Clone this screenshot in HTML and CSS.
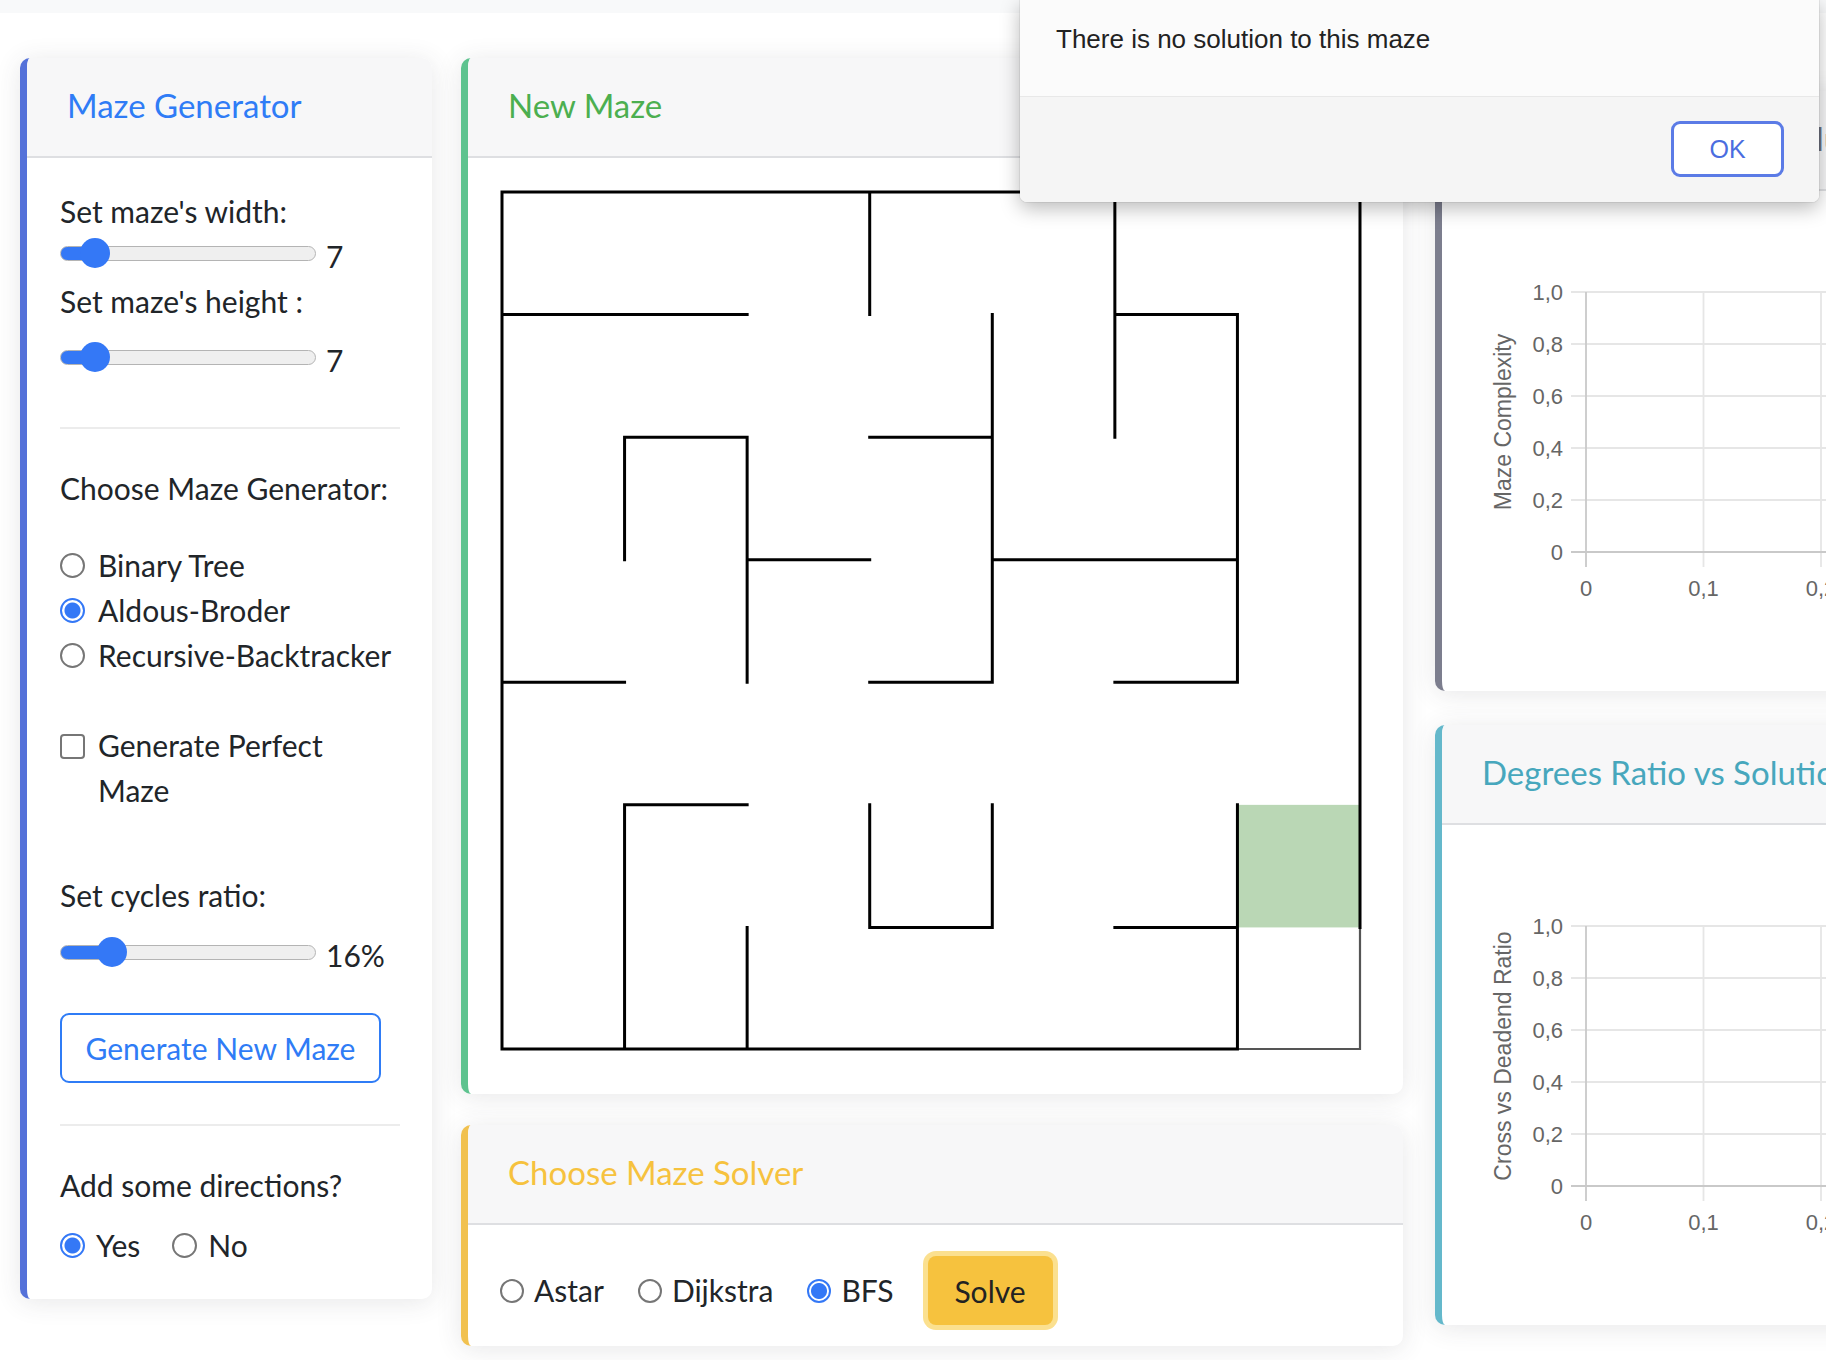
FILE: index.html
```html
<!DOCTYPE html>
<html lang="en">
<head>
<meta charset="utf-8">
<title>Maze</title>
<link rel="stylesheet" href="styles.css">
</head>
<body>
<div class="topbar"></div>
<main class="page">
  <section class="col col-left">
    <div class="card card-primary">
      <div class="card-header"><h6 class="title t-primary">Maze Generator</h6></div>
      <div class="card-body gen-body">
        <div class="line">Set maze's width:</div>
        <div class="range-row"><input class="range" type="range" min="5" max="28" value="7" style="--fill:35px"><span class="range-val">7</span></div>
        <div class="line">Set maze's height :</div>
        <div class="range-row mt14"><input class="range" type="range" min="5" max="28" value="7" style="--fill:35px"><span class="range-val">7</span></div>
        <hr class="sep sep1">
        <div class="line">Choose Maze Generator:</div>
        <div class="radio-group">
          <label class="opt"><input type="radio" name="gen" class="radio"><span>Binary Tree</span></label>
          <label class="opt"><input type="radio" name="gen" class="radio" checked><span>Aldous-Broder</span></label>
          <label class="opt"><input type="radio" name="gen" class="radio"><span>Recursive-Backtracker</span></label>
        </div>
        <label class="check-row"><input type="checkbox" class="check"><span class="check-text">Generate Perfect Maze</span></label>
        <div class="line mt60">Set cycles ratio:</div>
        <div class="range-row mt15"><input class="range" type="range" min="0" max="100" value="16" style="--fill:51px"><span class="range-val">16%</span></div>
        <button class="btn-outline">Generate New Maze</button>
        <hr class="sep sep2">
        <div class="line">Add some directions?</div>
        <div class="inline-opts mt15">
          <label class="opt"><input type="radio" name="dir" class="radio" checked><span>Yes</span></label>
          <label class="opt opt-no"><input type="radio" name="dir" class="radio"><span>No</span></label>
        </div>
      </div>
    </div>
  </section>

  <section class="col col-mid">
    <div class="card card-success">
      <div class="card-header"><h6 class="title t-success">New Maze</h6></div>
      <div class="card-body maze-body">
        <svg class="maze" width="858" height="857" viewBox="0 0 858 857">
          <rect x="735.43" y="612.86" width="122.57" height="122.57" fill="#bad7b5"/>
          <path class="walls-gray" d="M735.43 857 H858 V735.43"/>
          <path class="walls" d="M0 0 H858 M0 0 V857 H735.43 M858 0 V735.43
            M0 122.57 H245.14 M612.86 122.57 H735.43 M122.57 245.14 H245.14 M367.71 245.14 H490.29
            M245.14 367.71 H367.71 M490.29 367.71 H735.43 M0 490.29 H122.57 M367.71 490.29 H490.29
            M612.86 490.29 H735.43 M122.57 612.86 H245.14 M367.71 735.43 H490.29 M612.86 735.43 H735.43
            M367.71 0 V122.57 M612.86 0 V245.14 M735.43 122.57 V490.29 M490.29 122.57 V490.29
            M122.57 245.14 V367.71 M245.14 245.14 V490.29 M122.57 612.86 V857 M245.14 735.43 V857
            M367.71 612.86 V735.43 M490.29 612.86 V735.43 M735.43 612.86 V857"/>
        </svg>
      </div>
    </div>
    <div class="card card-warning">
      <div class="card-header"><h6 class="title t-warning">Choose Maze Solver</h6></div>
      <div class="card-body solver-body">
        <label class="opt"><input type="radio" name="sol" class="radio"><span>Astar</span></label>
        <label class="opt"><input type="radio" name="sol" class="radio"><span>Dijkstra</span></label>
        <label class="opt"><input type="radio" name="sol" class="radio" checked><span>BFS</span></label>
        <button class="btn-solve">Solve</button>
      </div>
    </div>
  </section>

  <section class="col col-right">
    <div class="card card-secondary">
      <div class="card-header"><h6 class="title t-secondary">Maze Complexity vs Solution Length</h6></div>
      <div class="card-body chart-body">
        <svg class="chart" width="560" height="500" viewBox="0 0 560 500">
          <g class="grid">
            <path d="M129 101 H560 M129 153 H560 M129 205 H560 M129 257 H560 M129 309 H560 M261.5 101 V376 M379 101 V376 M496.5 101 V376"/>
          </g>
          <g class="axis"><path d="M129 361 H560 M144 101 V376"/></g>
          <g class="ticks ticks-y">
            <text x="121" y="109">1,0</text><text x="121" y="161">0,8</text><text x="121" y="213">0,6</text>
            <text x="121" y="265">0,4</text><text x="121" y="317">0,2</text><text x="121" y="369">0</text>
          </g>
          <g class="ticks ticks-x">
            <text x="144" y="405">0</text><text x="261.5" y="405">0,1</text><text x="379" y="405">0,2</text><text x="496.5" y="405">0,3</text>
          </g>
          <text class="axis-title" transform="translate(69 231) rotate(-90)">Maze Complexity</text>
        </svg>
      </div>
    </div>
    <div class="card card-info">
      <div class="card-header"><h6 class="title t-info">Degrees Ratio vs Solution Length</h6></div>
      <div class="card-body chart-body">
        <svg class="chart" width="560" height="500" viewBox="0 0 560 500">
          <g class="grid">
            <path d="M129 101 H560 M129 153 H560 M129 205 H560 M129 257 H560 M129 309 H560 M261.5 101 V376 M379 101 V376 M496.5 101 V376"/>
          </g>
          <g class="axis"><path d="M129 361 H560 M144 101 V376"/></g>
          <g class="ticks ticks-y">
            <text x="121" y="109">1,0</text><text x="121" y="161">0,8</text><text x="121" y="213">0,6</text>
            <text x="121" y="265">0,4</text><text x="121" y="317">0,2</text><text x="121" y="369">0</text>
          </g>
          <g class="ticks ticks-x">
            <text x="144" y="405">0</text><text x="261.5" y="405">0,1</text><text x="379" y="405">0,2</text><text x="496.5" y="405">0,3</text>
          </g>
          <text class="axis-title" transform="translate(69 231) rotate(-90)">Cross vs Deadend Ratio</text>
        </svg>
      </div>
    </div>
  </section>
</main>

<div class="dialog">
  <div class="dialog-msg">There is no solution to this maze</div>
  <div class="dialog-foot"><button class="dialog-ok">OK</button></div>
</div>
</body>
</html>
```

FILE: styles.css
```css
* { box-sizing: border-box; }
html, body { margin: 0; padding: 0; }
body {
  width: 1826px;
  height: 1360px;
  overflow: hidden;
  background: #fff;
  font-family: "Lato", "Noto Sans", sans-serif;
  font-size: 30px;
  line-height: 45px;
  color: #212529;
  position: relative;
}

.topbar {
  height: 13px;
  background: #f8f9fa;
}

.page {
  display: flex;
  align-items: flex-start;
  padding: 45px 0 0 20px;
}

.col { flex-shrink: 0; display: flex; flex-direction: column; }
.col-left { width: 412px; margin-right: 29px; }
.col-mid { width: 942px; margin-right: 32px; gap: 31px; }
.col-right { width: 560px; margin-top: 33px; gap: 34px; }

.card {
  background: #fff;
  border-left: 7px solid #4e73df;
  border-radius: 10px;
  overflow: hidden;
  box-shadow: 0 3px 26px rgba(58, 59, 69, 0.12);
}
.card-primary { border-left-color: #5471d9; }
.card-success { border-left-color: #5ec38f; }
.card-warning { border-left-color: #f1c14f; }
.card-secondary { border-left-color: #7c7e8e; }
.card-info { border-left-color: #64b8cb; }

.card-header {
  background: #f7f7f8;
  border-bottom: 2px solid #dedfe2;
  padding: 27px 40px 31px 40px;
}
.title {
  margin: 0;
  font-size: 33px;
  line-height: 40px;
  font-weight: 400;
  white-space: nowrap;
}
.t-primary { color: #2f7cf6; }
.t-success { color: #4caf50; }
.t-warning { color: #f6c23e; }
.t-secondary { color: #6e707e; }
.t-info { color: #47a7bd; }

/* generator card */
.gen-body { padding: 31px 32px 31px 33px; }
.line { height: 45px; white-space: nowrap; }
.mt14 { margin-top: 14px; }
.mt15 { margin-top: 15px; }
.mt60 { margin-top: 60px; }

.range-row {
  display: flex;
  align-items: flex-start;
  height: 45px;
}
.range-val { margin-left: 10px; line-height: 45px; }

.range {
  -webkit-appearance: none;
  appearance: none;
  width: 256px;
  height: 30px;
  margin: 4px 0 0 0;
  padding: 0;
  background: transparent;
}
.range::-webkit-slider-runnable-track {
  box-sizing: border-box;
  height: 15px;
  border-radius: 8px;
  border: 1.5px solid #b4b4b4;
  background: linear-gradient(to right, #3478f6 var(--fill), #efefef var(--fill));
}
.range::-webkit-slider-thumb {
  -webkit-appearance: none;
  appearance: none;
  width: 30px;
  height: 30px;
  border-radius: 50%;
  background: #3478f6;
  border: none;
  margin-top: -9px;
}

.sep {
  border: 0;
  border-top: 2px solid #ececec;
  margin: 0;
}
.sep1 { margin: 44px 0 37px; }
.sep2 { margin: 41px 0 37px; }

.radio-group { margin-top: 32px; display: flex; flex-direction: column; }
.opt {
  display: flex;
  align-items: center;
  height: 45px;
  white-space: nowrap;
}
.radio {
  -webkit-appearance: none;
  appearance: none;
  width: 25px;
  height: 25px;
  margin: 0 13px 0 0;
  border: 2px solid #767676;
  border-radius: 50%;
  background: #fff;
  flex-shrink: 0;
}
.radio:checked {
  border-color: #3478f6;
  background: radial-gradient(circle, #3478f6 0 7.5px, #fff 8.5px);
}

.check-row {
  display: flex;
  align-items: flex-start;
  margin-top: 45px;
}
.check {
  -webkit-appearance: none;
  appearance: none;
  width: 25px;
  height: 25px;
  margin: 11px 13px 0 0;
  border: 2px solid #767676;
  border-radius: 4px;
  background: #fff;
  flex-shrink: 0;
}
.check-text { width: 260px; }

.btn-outline {
  display: block;
  margin-top: 35px;
  width: 321px;
  height: 70px;
  padding: 0;
  border: 2px solid #2f7cf6;
  border-radius: 9px;
  background: #fff;
  color: #2f7cf6;
  font-family: inherit;
  font-size: 30px;
  line-height: 45px;
}

.inline-opts { display: flex; }
.inline-opts .radio { margin-right: 11px; }
.opt-no { margin-left: 32px; }

/* maze card */
.maze-body { padding: 34px 43px 45px 34px; }
.maze { display: block; overflow: visible; }
.walls { fill: none; stroke: #000; stroke-width: 3; stroke-linecap: square; }
.walls-gray { fill: none; stroke: #555; stroke-width: 2.2; }

/* solver card */
.solver-body {
  display: flex;
  align-items: center;
  padding: 31px 32px 21px 32px;
}
.solver-body .radio { width: 24px; height: 24px; margin-right: 10px; }
.solver-body .opt { margin-right: 34px; }
.solver-body .opt:nth-child(3) { margin-right: 29px; }
.btn-solve {
  width: 125px;
  height: 69px;
  margin-left: 5px;
  border: none;
  border-radius: 8px;
  background: #f6c23e;
  color: #222;
  font-family: inherit;
  font-size: 30px;
  box-shadow: 0 0 0 5px #fbe08f;
}

/* charts */
.chart-body { padding: 0; height: 500px; }
.chart { display: block; }
.grid path { stroke: #e6e6e6; stroke-width: 1.8; fill: none; }
.axis path { stroke: #c9c9c9; stroke-width: 1.8; fill: none; }
.ticks text, .axis-title {
  font-family: "Liberation Sans", Arial, sans-serif;
  font-size: 22px;
  fill: #666;
}
.ticks-y text { text-anchor: end; }
.ticks-x text { text-anchor: middle; }
.axis-title { text-anchor: middle; font-size: 23px; }

/* alert dialog */
.dialog {
  position: absolute;
  top: 0;
  left: 1020px;
  width: 799px;
  height: 202px;
  background: #fbfbfb;
  border-radius: 0 0 7px 7px;
  box-shadow: 0 6px 20px rgba(0, 0, 0, 0.28), 0 0 0 1px rgba(0, 0, 0, 0.06);
  font-family: "Liberation Sans", Arial, sans-serif;
  overflow: hidden;
}
.dialog-msg {
  height: 97px;
  padding: 24px 0 0 36px;
  font-size: 26px;
  line-height: 30px;
  color: #222;
  border-bottom: 1px solid #e8e8e8;
}
.dialog-foot {
  height: 105px;
  background: #f5f5f5;
  display: flex;
  justify-content: flex-end;
  padding: 24px 35px 0 0;
}
.dialog-ok {
  width: 113px;
  height: 56px;
  border: 3.5px solid #5b7be6;
  border-radius: 9px;
  background: #fff;
  color: #4a6de0;
  font-family: "Liberation Sans", Arial, sans-serif;
  font-size: 25px;
  padding: 0;
}
```
